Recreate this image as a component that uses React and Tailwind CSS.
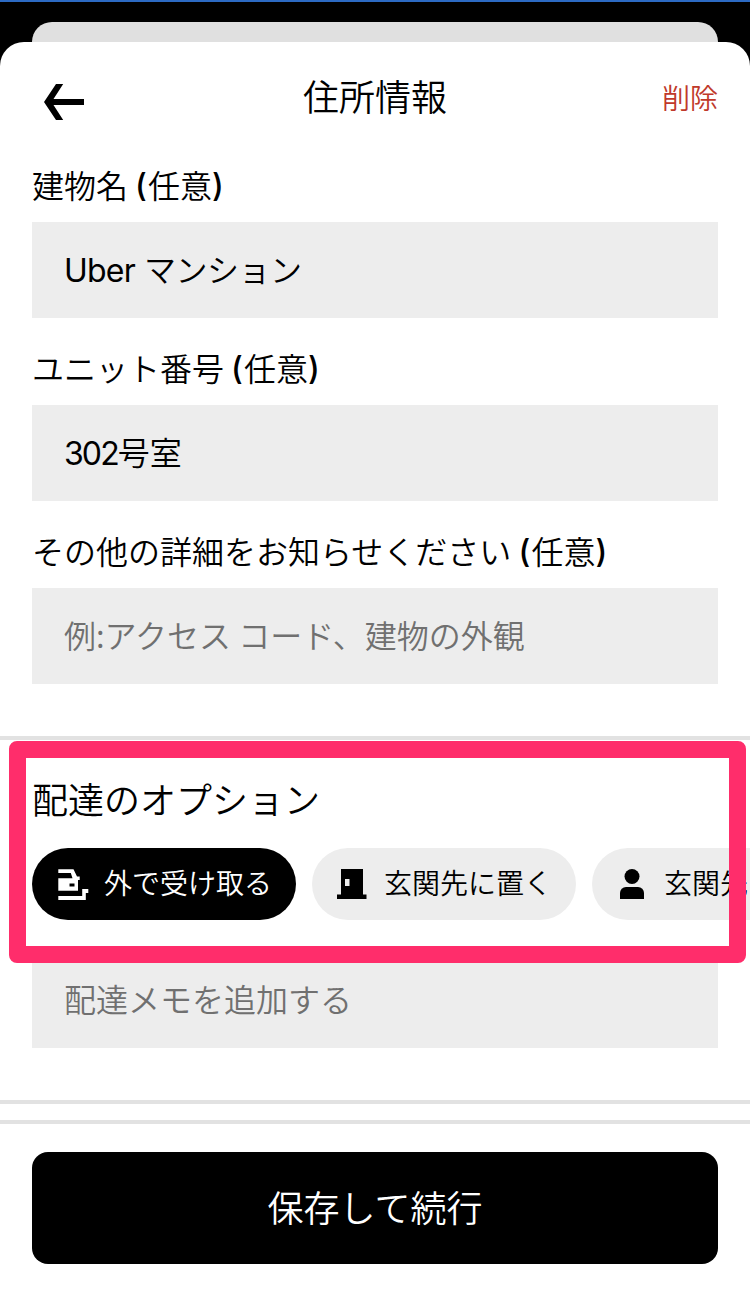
const fields = [
  { id: "building", label: "建物名", latin: "Uber", value: "マンション", gap: true },
  { id: "unit", label: "ユニット番号", latin: "302", value: "号室" },
  {
    id: "details",
    label: "その他の詳細をお知らせください",
    placeholder: "例:アクセス コード、建物の外観",
  },
];

const options = [
  { id: "outside", label: "外で受け取る", icon: CurbIcon, selected: true },
  { id: "leave", label: "玄関先に置く", icon: DoorIcon },
  { id: "meet", label: "玄関先", icon: PersonIcon },
];

function BackIcon() {
  return (
    <svg width="42" height="38" viewBox="0 0 42 38" aria-hidden="true">
      <path
        d="M13 1h7.200L10.500 16H41v6H10.500l9.700 15H13L1 19z"
        fill="currentColor"
      />
    </svg>
  );
}

function CurbIcon() {
  return (
    <svg
      width="32"
      height="32"
      viewBox="0 0 32 32"
      fill="currentColor"
      className="overflow-visible"
      aria-hidden="true"
    >
      <path
        fillRule="evenodd"
        d="M2.300 1.200H17.500l3.500 7.300h2.700V12H22v10.800H2.300V10.200h14.200L14.800 5H2.300z M13.500 15.500v3h5v-3z"
      />
      <path d="M2.300 28h23.900v-7h6.100v4h-2.500v7H2.300z" />
    </svg>
  );
}

function DoorIcon() {
  return (
    <svg width="32" height="32" viewBox="0 0 32 32" fill="currentColor" aria-hidden="true">
      <path d="M5 1h22v25.500h3.500V31H1v-4.500h4z M9 11v7h4.500v-7z" fillRule="evenodd" />
    </svg>
  );
}

function PersonIcon() {
  return (
    <svg width="32" height="32" viewBox="0 0 32 32" fill="currentColor" aria-hidden="true">
      <circle cx="16" cy="8.500" r="7.500" />
      <path d="M4 31v-6a6 6 0 0 1 6-6h12a6 6 0 0 1 6 6v6z" />
    </svg>
  );
}

function Field({ field }) {
  return (
    <div>
      <label
        htmlFor={field.id}
        className="flex h-[74px] items-center whitespace-pre pb-[3px] text-[32px] leading-none"
      >
        {field.label}
        <span className="ml-[7px] w-[13px] pt-1 font-['Inter'] font-medium">(</span>
        任意
        <span className="pt-1 font-['Inter'] font-medium">)</span>
      </label>
      <div
        id={field.id}
        className="flex h-24 items-center bg-[#ededed] px-8 pb-[5px] text-[32px] leading-none"
      >
        {field.latin && (
          <span
            className={`pt-[7px] font-['Inter'] font-normal ${
              field.gap ? "mr-[9px] tracking-[-0.8px]" : "tracking-[-1.9px]"
            }`}
          >
            {field.latin}
          </span>
        )}
        <span className={field.gap ? "tracking-[-0.5px]" : ""}>{field.value}</span>
        {field.placeholder && (
          <span className="text-[#707070]">{field.placeholder}</span>
        )}
      </div>
    </div>
  );
}

function OptionChip({ option }) {
  const Icon = option.icon;
  return (
    <button
      type="button"
      className={`flex h-[72px] w-[264px] shrink-0 items-center gap-4 rounded-full pl-6 text-[28px] leading-none ${
        option.selected ? "bg-black text-white" : "bg-[#ededed] text-black"
      }`}
    >
      <Icon />
      <span className="pb-1">{option.label}</span>
    </button>
  );
}

export default function App() {
  return (
    <div className="h-[1296px] w-[750px] overflow-hidden border-t-2 border-[#2c6ac3] bg-black font-['Noto_Sans_CJK_JP',sans-serif] font-[350] text-black">
      <div className="mx-8 mt-5 h-5 rounded-t-[20px] bg-[#e0e0e0]" />

      <main className="h-[1254px] rounded-t-[24px] bg-white">
        <header className="grid h-[106px] grid-cols-3 items-center px-8">
          <div className="pl-[11px] pt-[14px]">
            <BackIcon />
          </div>
          <h1 className="text-center text-[36px] leading-none">住所情報</h1>
          <button type="button" className="justify-self-end pt-[3px] text-[28px] leading-none text-[#c0392b]">
            削除
          </button>
        </header>

        <section className="flex flex-col gap-[13px] px-8">
          {fields.map((field) => (
            <Field key={field.id} field={field} />
          ))}
        </section>

        <section className="relative mt-[52px] border-y-4 border-[#e2e2e2] pb-[52px]">
          <h2 className="flex h-[108px] items-center px-8 pt-[7px] text-[36px] leading-none">
            配達のオプション
          </h2>
          <div className="flex gap-4 overflow-hidden pl-8">
            {options.map((option) => (
              <OptionChip key={option.id} option={option} />
            ))}
          </div>
          <div className="mx-8 mt-8 flex h-24 items-center bg-[#ededed] px-8 pb-[5px] text-[32px] leading-none text-[#707070]">
            配達メモを追加する
          </div>
          <div className="pointer-events-none absolute left-[9px] top-[1px] h-[222px] w-[737px] rounded-[8px] border-[17px] border-[#ff2d6b]" />
        </section>

        <footer className="mt-4 border-t-4 border-[#e2e2e2] px-8 pt-7">
          <button
            type="button"
            className="h-28 w-full rounded-[16px] bg-black pb-1 text-[36px] leading-none text-white"
          >
            保存して続行
          </button>
        </footer>
      </main>
    </div>
  );
}
